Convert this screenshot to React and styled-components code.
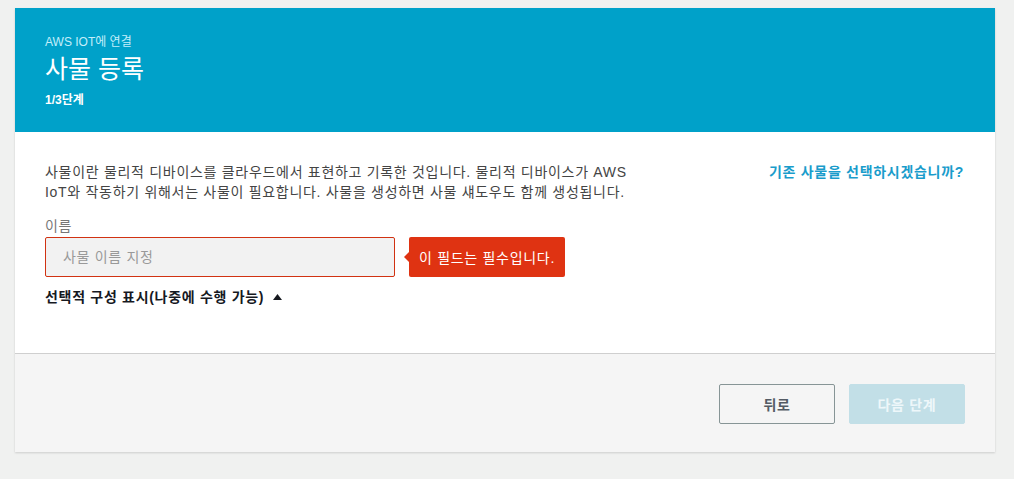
import React from "react";
import styled, { createGlobalStyle } from "styled-components";

const GlobalStyle = createGlobalStyle`
  body {
    margin: 0;
    background: #f0f1f0;
    font-family: "Liberation Sans", "Noto Sans CJK KR", sans-serif;
  }
`;

const Page = styled.div`
  padding: 8px 19px 27px 15px;
`;

const Card = styled.div`
  width: 980px;
  box-shadow: 0 1px 2px rgba(0, 0, 0, 0.15);
`;

const Header = styled.header`
  background: #00a1c9;
  height: 124px;
  box-sizing: border-box;
  padding: 26px 30px 0;
  display: flex;
  flex-direction: column;
`;

const Eyebrow = styled.div`
  font-size: 12px;
  line-height: 16px;
  color: #c4eefa;
`;

const Title = styled.h1`
  margin: 2px 0 0;
  font-size: 25px;
  font-weight: 400;
  line-height: 34px;
  color: #fff;
`;

const Step = styled.div`
  margin-top: 6px;
  font-size: 12px;
  line-height: 16px;
  font-weight: 700;
  color: #fff;
`;

const Body = styled.section`
  background: #fff;
  height: 221px;
  box-sizing: border-box;
  padding: 30px 30px 0;
  font-size: 14px;
  letter-spacing: 0.7px;
`;

const IntroRow = styled.div`
  display: flex;
  justify-content: space-between;
  align-items: flex-start;
`;

const Intro = styled.p`
  margin: 0;
  white-space: nowrap;
  line-height: 20px;
  color: #444;
`;

const Link = styled.a`
  line-height: 20px;
  font-weight: 700;
  color: #1a9ccb;
  text-decoration: none;
  cursor: pointer;
  margin-right: 1px;
`;

const Label = styled.div`
  margin-top: 14px;
  line-height: 20px;
  color: #777;
`;

const FieldRow = styled.div`
  margin-top: 1px;
  display: flex;
  align-items: center;
  gap: 14px;
`;

const Input = styled.input`
  width: 350px;
  height: 40px;
  box-sizing: border-box;
  border: 1px solid #d13212;
  border-radius: 2px;
  background: #f2f2f2;
  padding: 0 17px;
  font-family: inherit;
  font-size: 14px;
  letter-spacing: 0.7px;
  color: #444;
  outline: none;

  &::placeholder {
    color: #999;
  }
`;

const Tip = styled.div`
  position: relative;
  height: 40px;
  display: flex;
  align-items: center;
  padding: 0 10px;
  background: #df3312;
  border-radius: 2px;
  color: #fff;

  &::before {
    content: "";
    position: absolute;
    left: -5px;
    top: 50%;
    margin-top: -5px;
    border-style: solid;
    border-width: 5px 5px 5px 0;
    border-color: transparent #df3312 transparent transparent;
  }
`;

const Toggle = styled.button`
  margin-top: 10px;
  padding: 0;
  border: 0;
  background: none;
  display: flex;
  align-items: center;
  gap: 9px;
  font-family: inherit;
  font-size: 14px;
  letter-spacing: 0.7px;
  line-height: 20px;
  font-weight: 700;
  color: #16191f;
  cursor: pointer;
`;

const Footer = styled.footer`
  background: #f5f5f5;
  border-top: 1px solid #cfcfcf;
  height: 99px;
  box-sizing: border-box;
  padding: 30px 30px 0;
  display: flex;
  justify-content: flex-end;
  align-items: flex-start;
  gap: 14px;
`;

const Button = styled.button`
  width: 116px;
  height: 40px;
  box-sizing: border-box;
  border-radius: 2px;
  font-family: inherit;
  font-size: 14px;
  letter-spacing: 0.7px;
  font-weight: 700;
  cursor: pointer;
  border: 1px solid ${(p) => (p.primary ? "#c2dfe7" : "#879596")};
  background: ${(p) => (p.primary ? "#c2dfe7" : "transparent")};
  color: ${(p) => (p.primary ? "#eef7fa" : "#545b64")};
`;

const Caret = () => (
  <svg width="9" height="6" viewBox="0 0 9 6">
    <path d="M0 6 L4.5 0 L9 6 Z" fill="#16191f" />
  </svg>
);

const App = () => {
  return (
    <>
      <GlobalStyle />
      <Page>
        <Card>
          <Header>
            <Eyebrow>AWS IOT에 연결</Eyebrow>
            <Title>사물 등록</Title>
            <Step>1/3단계</Step>
          </Header>
          <Body>
            <IntroRow>
              <Intro>
                사물이란 물리적 디바이스를 클라우드에서 표현하고 기록한 것입니다. 물리적 디바이스가 AWS
                <br />
                IoT와 작동하기 위해서는 사물이 필요합니다. 사물을 생성하면 사물 섀도우도 함께 생성됩니다.
              </Intro>
              <Link>기존 사물을 선택하시겠습니까?</Link>
            </IntroRow>
            <Label>이름</Label>
            <FieldRow>
              <Input placeholder="사물 이름 지정" />
              <Tip>이 필드는 필수입니다.</Tip>
            </FieldRow>
            <Toggle>
              선택적 구성 표시(나중에 수행 가능)
              <Caret />
            </Toggle>
          </Body>
          <Footer>
            <Button>뒤로</Button>
            <Button primary>다음 단계</Button>
          </Footer>
        </Card>
      </Page>
    </>
  );
};

export default App;
